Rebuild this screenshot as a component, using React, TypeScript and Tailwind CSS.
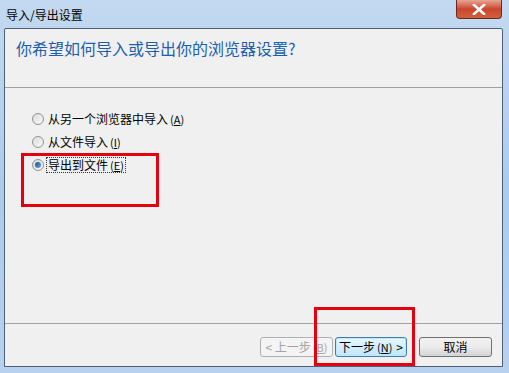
import React from 'react';

const FONT = "font-['Noto_Sans_CJK_SC','Microsoft_YaHei',sans-serif]";

interface OptionItem {
  label: string;
  key: string;
  checked?: boolean;
}

const OPTIONS: OptionItem[] = [
  { label: '从另一个浏览器中导入', key: 'A' },
  { label: '从文件导入', key: 'I' },
  { label: '导出到文件', key: 'E', checked: true },
];

function Radio({ checked }: { checked?: boolean }) {
  return (
    <span className="w-[12px] h-[12px] rounded-full border border-[#8f9092] bg-gradient-to-br from-[#dcdcdc] to-[#f8f8f8] flex items-center justify-center shrink-0">
      {checked && (
        <span className="w-[6px] h-[6px] rounded-full bg-gradient-to-br from-[#1b4f8a] to-[#6aa7de]" />
      )}
    </span>
  );
}

function Mnemonic({ k, dim }: { k: string; dim?: boolean }) {
  return (
    <span className={`ml-[2px] text-[11px] ${dim ? 'text-[#a3a3a3]' : ''}`}>
      (<span className="underline">{k}</span>)
    </span>
  );
}

export default function App() {
  return (
    <div className={`relative w-[509px] h-[373px] overflow-hidden bg-gradient-to-b from-[#c3d9f1] via-[#aecbec] to-[#b7d1ee] ${FONT}`}>
      {/* title bar */}
      <div className="h-[28px] flex items-start justify-between pl-[6px]">
        <span className="text-[12px] leading-[14px] mt-[8px] text-black">导入/导出设置</span>
        <div className="mr-[7px] w-[46px] h-[19px] rounded-b-[4px] border border-[#6b2a20] border-t-0 bg-gradient-to-b from-[#e8a493] via-[#c9462c] to-[#d0613f] flex items-center justify-center">
          <svg width="14" height="11" viewBox="0 0 14 11">
            <path d="M2 1 L12 10 M12 1 L2 10" stroke="#ffffff" strokeWidth="2.6" strokeLinecap="square" />
          </svg>
        </div>
      </div>

      {/* client area */}
      <div className="ml-[4px] mr-[6px] h-[339px] border border-[#4d6078] rounded-t-[2px] bg-[#f0f0f0] flex flex-col">
        <div className="h-[59px] border-b border-[#a0a0a0] pl-[11px] pt-[7px]">
          <span className="text-[16px] leading-[20px] text-[#1d5fae]">你希望如何导入或导出你的浏览器设置?</span>
        </div>

        <div className="flex-1 pl-[27px] pt-[23px] flex flex-col gap-[7px] border-b border-[#a0a0a0]">
          {OPTIONS.map((o) => (
            <div key={o.key} className="h-[16px] flex items-center gap-[3px] text-[12px] text-black">
              <Radio checked={o.checked} />
              <span className={`leading-[14px] px-[1px] ${o.checked ? 'outline-1 outline-dotted outline-[#333]' : ''}`}>
                {o.label}
                <Mnemonic k={o.key} />
              </span>
            </div>
          ))}
        </div>

        <div className="h-[42px] flex items-start justify-end pr-[10px] pt-[13px] text-[12px]">
          <button className="w-[73px] h-[20px] rounded-[3px] border border-[#adb2b5] bg-[#f4f4f4] text-[#a3a3a3] flex items-center justify-center leading-none">
            &lt; 上一步<Mnemonic k="B" dim />
          </button>
          <button className="ml-[2px] w-[72px] h-[20px] rounded-[3px] border border-[#3c7fb1] bg-gradient-to-b from-[#e9f6fd] to-[#bee6fd] shadow-[inset_0_0_0_1px_#c0e6fa] text-black flex items-center justify-center leading-none">
            下一步<Mnemonic k="N" /><span className="ml-[4px]">&gt;</span>
          </button>
          <button className="ml-[12px] w-[73px] h-[20px] rounded-[3px] border border-[#707070] bg-gradient-to-b from-[#f2f2f2] via-[#ebebeb] to-[#d4d4d4] text-black flex items-center justify-center leading-none">
            取消
          </button>
        </div>
      </div>

      {/* annotation boxes */}
      <div className="absolute left-[21px] top-[153px] w-[138px] h-[54px] border-[3px] border-[#e5000f]" />
      <div className="absolute left-[314px] top-[307px] w-[101px] h-[59px] border-[3px] border-[#e5000f]" />
    </div>
  );
}
